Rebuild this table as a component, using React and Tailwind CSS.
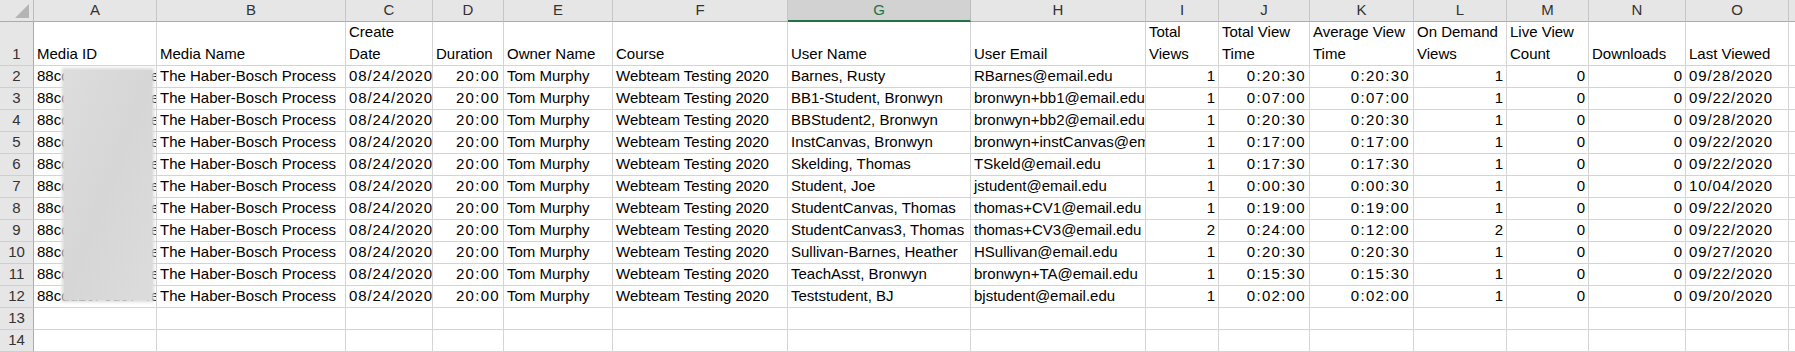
import React from "react";

// column setup for the sheet: width class, header text lines, alignment and digit style
const cols = [
  { id: "A", w: "w-[123px]", head: ["Media ID"] },
  { id: "B", w: "w-[189px]", head: ["Media Name"] },
  { id: "C", w: "w-[87px]", head: ["Create", "Date"], kind: "date" },
  { id: "D", w: "w-[71px]", head: ["Duration"], kind: "time", right: true },
  { id: "E", w: "w-[109px]", head: ["Owner Name"] },
  { id: "F", w: "w-[175px]", head: ["Course"] },
  { id: "G", w: "w-[183px]", head: ["User Name"], selected: true },
  { id: "H", w: "w-[175px]", head: ["User Email"] },
  { id: "I", w: "w-[73px]", head: ["Total", "Views"], right: true },
  { id: "J", w: "w-[91px]", head: ["Total View", "Time"], kind: "time", right: true },
  { id: "K", w: "w-[104px]", head: ["Average View", "Time"], kind: "time", right: true },
  { id: "L", w: "w-[93px]", head: ["On Demand", "Views"], right: true },
  { id: "M", w: "w-[82px]", head: ["Live View", "Count"], right: true },
  { id: "N", w: "w-[97px]", head: ["Downloads"], right: true },
  { id: "O", w: "w-[103px]", head: ["Last Viewed"], kind: "date" },
];

const views = [
  ["Barnes, Rusty", "RBarnes@email.edu", "1", "0:20:30", "0:20:30", "1", "09/28/2020"],
  ["BB1-Student, Bronwyn", "bronwyn+bb1@email.edu", "1", "0:07:00", "0:07:00", "1", "09/22/2020"],
  ["BBStudent2, Bronwyn", "bronwyn+bb2@email.edu", "1", "0:20:30", "0:20:30", "1", "09/28/2020"],
  ["InstCanvas, Bronwyn", "bronwyn+instCanvas@email.edu", "1", "0:17:00", "0:17:00", "1", "09/22/2020"],
  ["Skelding, Thomas", "TSkeld@email.edu", "1", "0:17:30", "0:17:30", "1", "09/22/2020"],
  ["Student, Joe", "jstudent@email.edu", "1", "0:00:30", "0:00:30", "1", "10/04/2020"],
  ["StudentCanvas, Thomas", "thomas+CV1@email.edu", "1", "0:19:00", "0:19:00", "1", "09/22/2020"],
  ["StudentCanvas3, Thomas", "thomas+CV3@email.edu", "2", "0:24:00", "0:12:00", "2", "09/22/2020"],
  ["Sullivan-Barnes, Heather", "HSullivan@email.edu", "1", "0:20:30", "0:20:30", "1", "09/27/2020"],
  ["TeachAsst, Bronwyn", "bronwyn+TA@email.edu", "1", "0:15:30", "0:15:30", "1", "09/22/2020"],
  ["Teststudent, BJ", "bjstudent@email.edu", "1", "0:02:00", "0:02:00", "1", "09/20/2020"],
];

const rows = views.map(([user, email, total, totalTime, avgTime, onDemand, last]) => [
  "88cdd16f-0d97-4e1b-9a3c",
  "The Haber-Bosch Process",
  "08/24/2020",
  "20:00",
  "Tom Murphy",
  "Webteam Testing 2020",
  user,
  email,
  total,
  totalTime,
  avgTime,
  onDemand,
  "0",
  "0",
  last,
]);

function Cell({ col, children, tall }) {
  const digits =
    col.kind === "date" ? "tracking-[0.9px]" : col.kind === "time" ? "tracking-[1.3px]" : "";
  return (
    <div
      className={`${col.w} shrink-0 ${tall ? "h-[44px]" : "h-[22px]"} border-r border-b border-[#d4d4d4] overflow-hidden whitespace-nowrap flex flex-col justify-end leading-[22px] ${
        col.right ? "items-end pr-[3px] pl-[2px]" : "items-start pl-[3px] pr-[2px]"
      }`}
    >
      {Array.isArray(children) ? (
        children.map((line) => <span key={line}>{line}</span>)
      ) : (
        <span className={digits}>{children}</span>
      )}
    </div>
  );
}

function RowHead({ n, tall }) {
  return (
    <div
      className={`w-[34px] shrink-0 ${tall ? "h-[44px]" : "h-[22px]"} bg-[#e6e6e6] border-r border-b border-r-[#ababab] border-b-[#cfcfcf] flex items-end justify-center leading-[22px] text-[#333]`}
    >
      {n}
    </div>
  );
}

export default function App() {
  return (
    <div
      className="relative w-[1795px] h-[352px] overflow-hidden bg-white text-black text-[15px]"
      style={{ fontFamily: "'Liberation Sans', Arial, sans-serif" }}
    >
      {/* column letters */}
      <div className="flex h-[22px]">
        <div className="w-[34px] shrink-0 h-[22px] bg-[#e6e6e6] border-r border-b border-r-[#bdbdbd] border-b-[#ababab] flex items-center justify-end pr-[4px]">
          <svg width="14" height="14" viewBox="0 0 14 14">
            <polygon points="14,0 14,14 0,14" fill="#b4b4b4" />
          </svg>
        </div>
        {cols.map((col) =>
          col.selected ? (
            <div
              key={col.id}
              className={`${col.w} shrink-0 h-[22px] bg-[#d2d2d2] border-r border-r-[#bdbdbd] border-b-2 border-b-[#217346] flex items-center justify-center text-[#217346]`}
            >
              {col.id}
            </div>
          ) : (
            <div
              key={col.id}
              className={`${col.w} shrink-0 h-[22px] bg-[#e6e6e6] border-r border-b border-r-[#c6c6c6] border-b-[#ababab] flex items-center justify-center text-[#333]`}
            >
              {col.id}
            </div>
          )
        )}
        <div className="w-[20px] shrink-0 h-[22px] bg-[#e6e6e6] border-b border-b-[#ababab]" />
      </div>

      {/* header row */}
      <div className="flex">
        <RowHead n={1} tall />
        {cols.map((col) => (
          <Cell key={col.id} col={{ ...col, kind: undefined, right: false }} tall>
            {col.head}
          </Cell>
        ))}
        <div className="w-[20px] shrink-0 h-[44px] border-b border-[#d4d4d4]" />
      </div>

      {/* data rows */}
      {rows.map((row, r) => (
        <div key={r} className="flex">
          <RowHead n={r + 2} />
          {cols.map((col, c) => (
            <Cell key={col.id} col={col}>
              {row[c]}
            </Cell>
          ))}
          <div className="w-[20px] shrink-0 h-[22px] border-b border-[#d4d4d4]" />
        </div>
      ))}

      {/* empty rows */}
      {[13, 14].map((n) => (
        <div key={n} className="flex">
          <RowHead n={n} />
          {cols.map((col) => (
            <Cell key={col.id} col={col}>
              {""}
            </Cell>
          ))}
          <div className="w-[20px] shrink-0 h-[22px] border-b border-[#d4d4d4]" />
        </div>
      ))}

      {/* redaction smear over the media ids: solid core with a soft rim */}
      <div className="absolute left-[64px] top-[70px] w-[88px] h-[230px] bg-gradient-to-br from-[#dddddd] via-[#d6d6d6] to-[#dcdcdc] shadow-[0_0_3px_2px_#dadada]" />
    </div>
  );
}
